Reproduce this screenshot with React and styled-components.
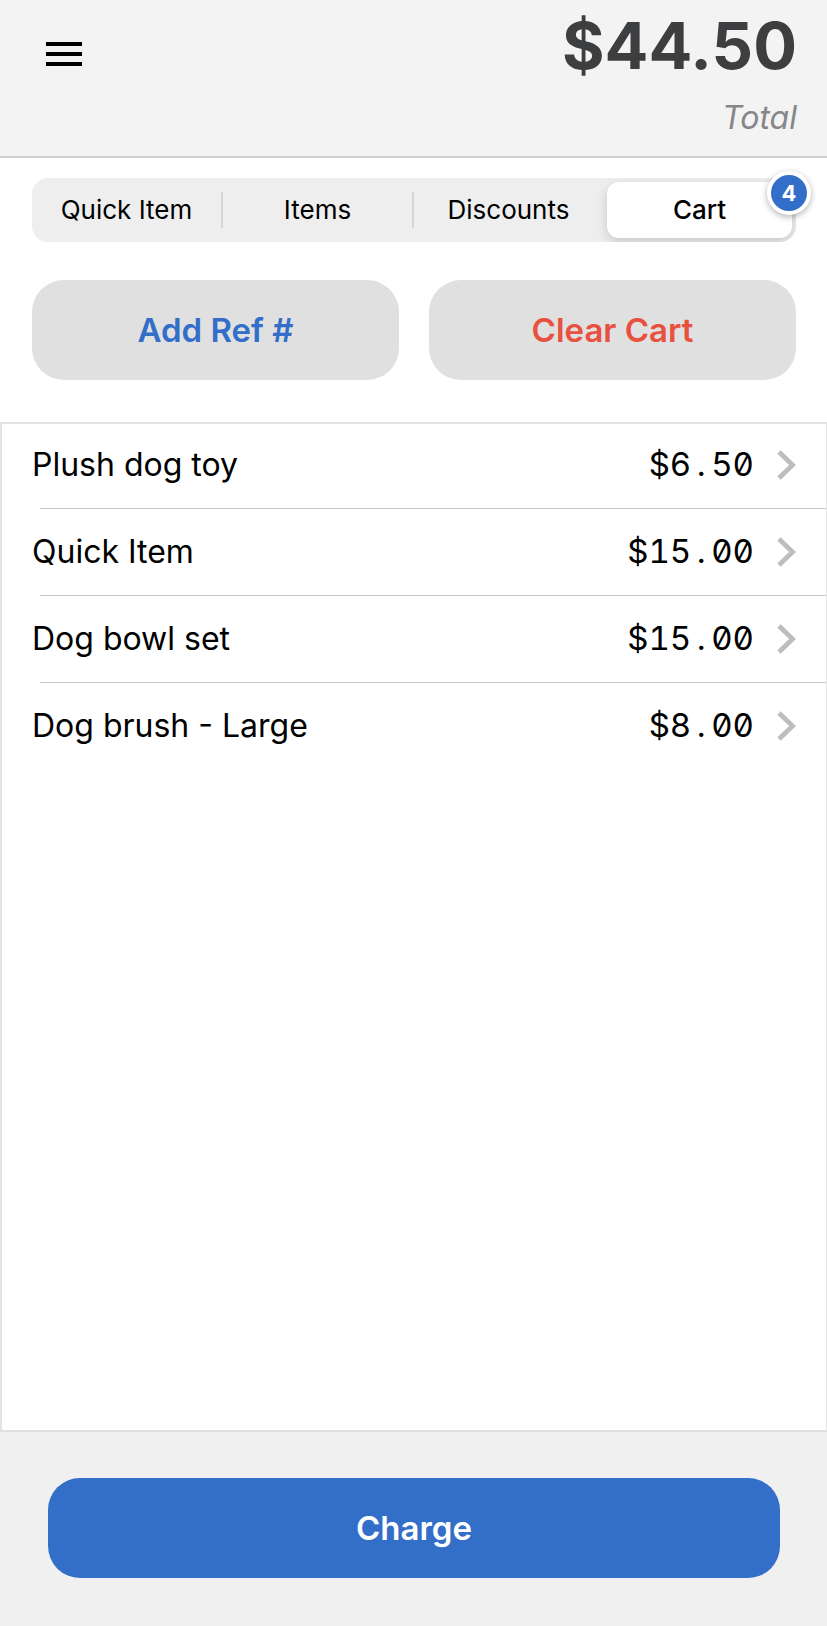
import React, { useState } from 'react';
import styled, { createGlobalStyle } from 'styled-components';

const GlobalStyle = createGlobalStyle`
  * {
    box-sizing: border-box;
  }

  body {
    margin: 0;
    background-color: white;
    color: black;
    font-family: Inter, Roboto, sans-serif;
  }

  button {
    margin: 0;
    padding: 0;
    border: 0;
    background: none;
    color: inherit;
    font-family: inherit;
    cursor: pointer;
  }
`;

const MainContainer = styled.div`
  display: flex;
  flex-direction: column;
  min-height: 100vh;
`;

const Header = styled.header`
  display: flex;
  justify-content: space-between;
  align-items: flex-start;
  padding: 0 30px 0 32px;
  height: 158px;
  background-color: #f3f3f3;
  border-bottom: 2px solid #cdcdcd;
`;

const MenuButton = styled.button`
  display: flex;
  margin-top: 28px;
  padding: 14px;
`;

const TotalContainer = styled.div`
  text-align: right;
`;

const Amount = styled.div`
  padding-top: 6px;
  color: #3d3e40;
  font-size: 65px;
  font-weight: 700;
  line-height: 80px;
`;

const TotalLabel = styled.div`
  margin-top: 12px;
  color: #868688;
  font-size: 32px;
  font-style: italic;
  line-height: 40px;
`;

const Controls = styled.div`
  padding: 20px 31px 42px 32px;
`;

const TabsContainer = styled.div`
  position: relative;
`;

const Tabs = styled.div`
  display: grid;
  grid-template-columns: 1fr 2px 1fr 2px 1fr 2px 1fr;
  align-items: center;
  height: 64px;
  padding-right: 2px;
  border-radius: 16px;
  background-color: #eeeeee;
  overflow: hidden;
`;

const Tab = styled.button`
  height: 56px;
  margin: ${props => (props.$active ? '0 2px' : '0')};
  padding-bottom: 2px;
  border-radius: 12px;
  background-color: ${props => (props.$active ? 'white' : 'transparent')};
  box-shadow: ${props => (props.$active ? '0 4px 12px rgba(0, 0, 0, 0.16)' : 'none')};
  font-size: 26px;
  font-weight: ${props => (props.$active ? 500 : 400)};
`;

const TabDivider = styled.span`
  height: 36px;
  background-color: ${props => (props.$hidden ? 'transparent' : '#d6d6d6')};
`;

const Badge = styled.span`
  position: absolute;
  top: -7px;
  right: -15px;
  display: flex;
  justify-content: center;
  align-items: center;
  width: 44px;
  height: 44px;
  border: 4px solid white;
  border-radius: 50%;
  background-color: #336ec8;
  box-shadow: 0 2px 6px rgba(0, 0, 0, 0.3);
  color: white;
  font-size: 22px;
  font-weight: 700;
`;

const Actions = styled.div`
  display: flex;
  gap: 30px;
  margin-top: 38px;
`;

const Button = styled.button`
  flex: 1 1 0;
  height: 100px;
  border-radius: 32px;
  background-color: #e0e0e0;
  color: ${props => props.$color};
  font-size: 33px;
  font-weight: 600;
`;

const ChargeButton = styled(Button)`
  background-color: #336ec8;
  color: white;
`;

const CartList = styled.ul`
  flex: 1;
  margin: 0;
  padding: 0 1px 0 0;
  list-style: none;
  box-shadow: inset 2px 2px #e4e4e4, inset -1px 0 #e4e4e4;
`;

const CartItem = styled.li`
  &:not(:last-child)::after {
    content: '';
    display: block;
    margin-left: 40px;
    border-bottom: 1px solid #c6c6c8;
  }
`;

const ItemButton = styled.button`
  display: flex;
  align-items: center;
  width: 100%;
  height: 86px;
  padding: 0 30px 0 32px;
  font-size: 32px;
`;

const ItemName = styled.span`
  flex: 1;
  padding-bottom: 2px;
  text-align: left;
`;

const ItemPrice = styled.span`
  margin-right: 23px;
  padding-bottom: 2px;
  font-size: 33px;
  font-variant-numeric: tabular-nums slashed-zero;
`;

// the decimal point takes as much room as a digit
const Point = styled.span`
  display: inline-block;
  width: 20px;
  text-align: center;
`;

const Footer = styled.footer`
  display: flex;
  padding: 46px 47px 48px 48px;
  border-top: 2px solid #dfdfdf;
  background-color: #f0f0f0;
`;

const tabNames = ['Quick Item', 'Items', 'Discounts', 'Cart'];

const cartItems = [
  { name: 'Plush dog toy', price: 6.5 },
  { name: 'Quick Item', price: 15 },
  { name: 'Dog bowl set', price: 15 },
  { name: 'Dog brush - Large', price: 8 },
];

function formatPrice(value) {
  return `$${value.toFixed(2)}`;
}

function Price({ value }) {
  const [dollars, cents] = formatPrice(value).split('.');
  return <ItemPrice>{dollars}<Point>.</Point>{cents}</ItemPrice>;
}

function MenuIcon() {
  return (
    <svg width="36" height="24" viewBox="0 0 36 24" aria-hidden="true">
      <path d="M0 0h36v4H0zM0 10h36v4H0zM0 20h36v4H0z" />
    </svg>
  );
}

function ChevronIcon() {
  return (
    <svg width="19" height="30" viewBox="0 0 19 30" fill="none" aria-hidden="true">
      <path d="M2 2L15.6 15L2 28" stroke="#bdbdbd" strokeWidth="4.8" />
    </svg>
  );
}

function App() {
  const [activeTab, setActiveTab] = useState('Cart');
  const [items, setItems] = useState(cartItems);
  const total = items.reduce((sum, item) => sum + item.price, 0);

  return (
    <MainContainer>
      <GlobalStyle />
      <Header>
        <MenuButton aria-label="Menu"><MenuIcon /></MenuButton>
        <TotalContainer>
          <Amount>{formatPrice(total)}</Amount>
          <TotalLabel>Total</TotalLabel>
        </TotalContainer>
      </Header>

      <Controls>
        <TabsContainer>
          <Tabs role="tablist">
            {tabNames.map((name, index) => (
              <React.Fragment key={name}>
                {index > 0 && <TabDivider $hidden={name === activeTab || tabNames[index - 1] === activeTab} />}
                <Tab
                  role="tab"
                  aria-selected={name === activeTab}
                  $active={name === activeTab}
                  onClick={() => setActiveTab(name)}
                >
                  {name}
                </Tab>
              </React.Fragment>
            ))}
          </Tabs>
          <Badge>{items.length}</Badge>
        </TabsContainer>
        <Actions>
          <Button $color="#336ec8">Add Ref #</Button>
          <Button $color="#e8503f" onClick={() => setItems([])}>Clear Cart</Button>
        </Actions>
      </Controls>

      <CartList>
        {items.map(item => (
          <CartItem key={item.name}>
            <ItemButton>
              <ItemName>{item.name}</ItemName>
              <Price value={item.price} />
              <ChevronIcon />
            </ItemButton>
          </CartItem>
        ))}
      </CartList>

      <Footer>
        <ChargeButton>Charge</ChargeButton>
      </Footer>
    </MainContainer>
  );
}

export default App;
